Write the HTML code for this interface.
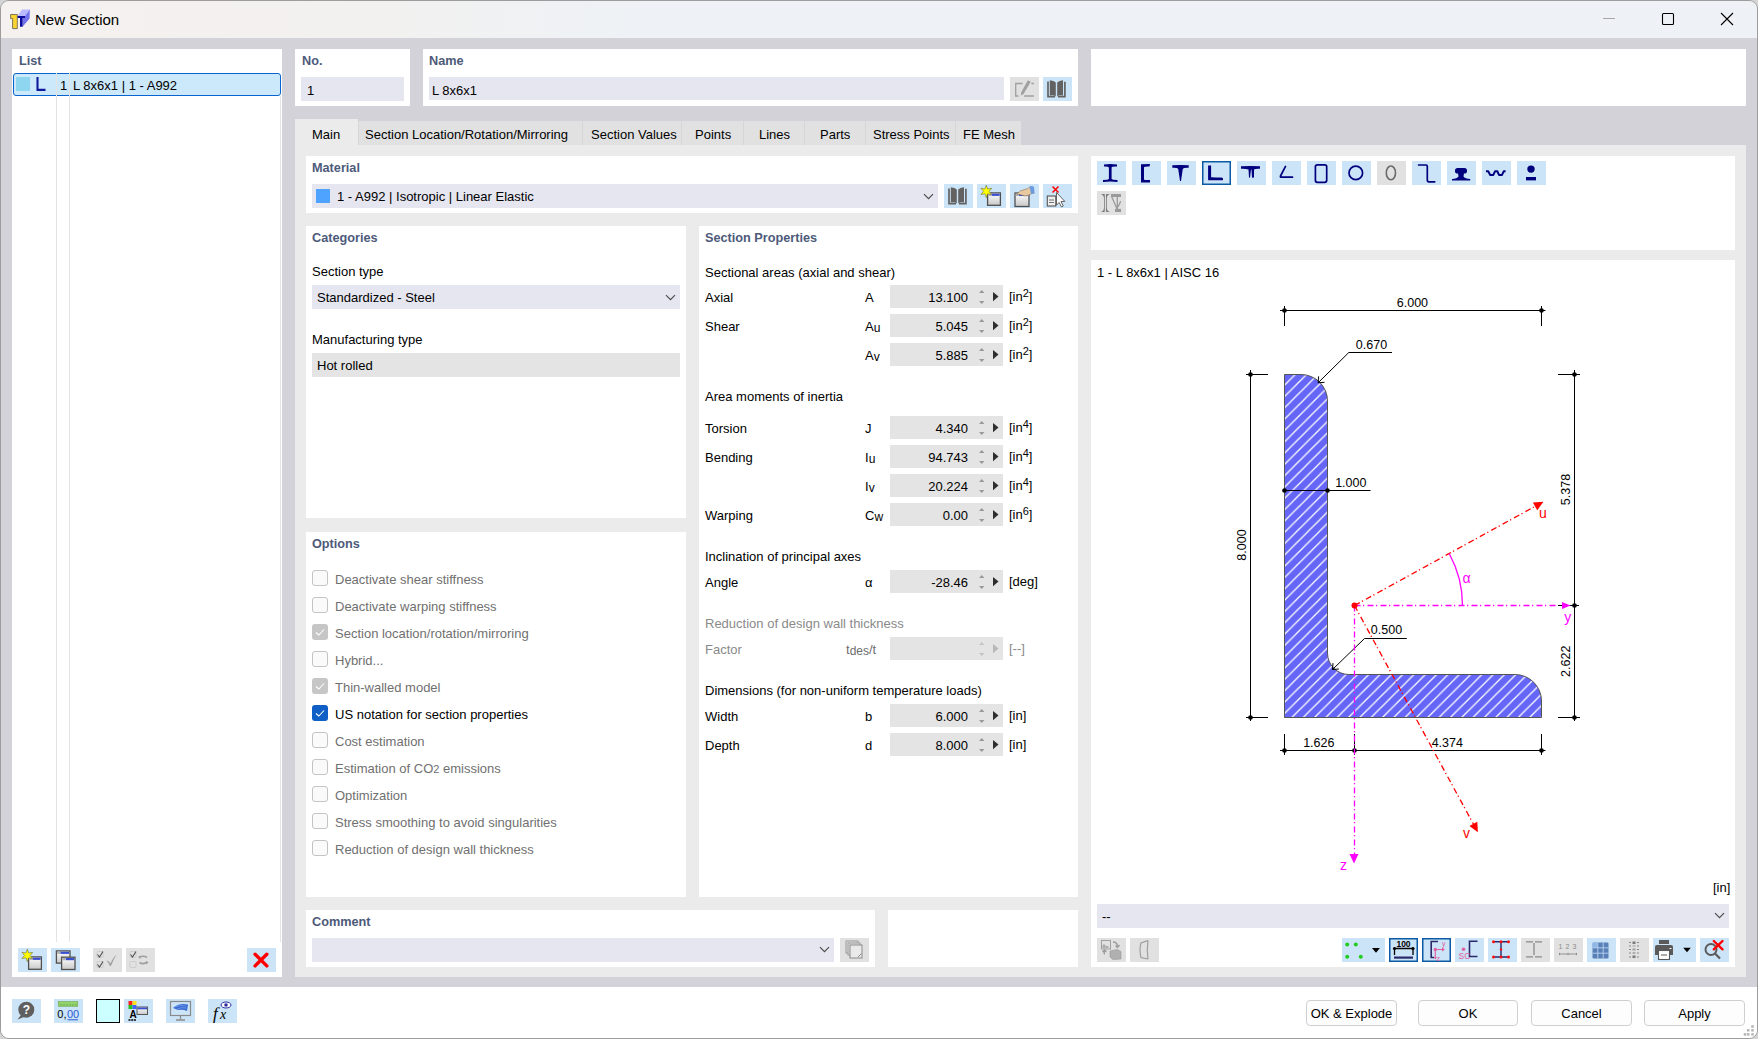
<!DOCTYPE html><html><head><meta charset="utf-8"><style>
html,body{margin:0;padding:0;width:1758px;height:1039px;overflow:hidden;background:#d4d4d4;}
.a{position:absolute;}
.t,.h{font-family:"Liberation Sans",sans-serif;font-size:13px;line-height:16px;white-space:nowrap;color:#000;}
.h{font-weight:bold;font-size:12.7px;color:#4d5a7a;}
.g{color:#707070;}
svg{position:absolute;left:0;top:0;}
</style></head><body>
<div class="a" style="left:0;top:0;width:1756px;height:1037px;border:1px solid #9c9c9c;border-radius:9px;overflow:hidden;background:#d3d2d8;">

<div class="a" style="left:-1px;top:-1px;width:1758px;height:1039px;">
<div class="a" style="left:0px;top:0px;width:1758px;height:38px;background:linear-gradient(to right,#f4f1ef 0px,#f3f1ef 330px,#eef2f6 640px,#eef2f7 1758px);"></div>
<div class="a t" style="left:35px;top:11px;font-size:15px;line-height:18px;">New Section</div>
<div class="a" style="left:0px;top:987px;width:1758px;height:52px;background:#ffffff;"></div>
<div class="a" style="left:12px;top:49px;width:270px;height:928px;background:#fff;"></div>
<div class="a h" style="left:19px;top:53px;">List</div>
<div class="a" style="left:295px;top:49px;width:115px;height:57px;background:#fff;"></div>
<div class="a h" style="left:302px;top:53px;">No.</div>
<div class="a" style="left:301px;top:77px;width:103px;height:24px;background:#e6e6f0;"></div>
<div class="a t" style="left:307px;top:83px;">1</div>
<div class="a" style="left:423px;top:49px;width:655px;height:57px;background:#fff;"></div>
<div class="a h" style="left:429px;top:53px;">Name</div>
<div class="a" style="left:429px;top:77px;width:575px;height:23px;background:#e6e6f0;"></div>
<div class="a t" style="left:432px;top:83px;">L 8x6x1</div>
<div class="a" style="left:1010px;top:77px;width:29px;height:24px;background:#e1e1e1;"></div>
<div class="a" style="left:1043px;top:77px;width:29px;height:24px;background:#cce4f7;"></div>
<div class="a" style="left:1091px;top:49px;width:655px;height:57px;background:#fff;"></div>
<div class="a" style="left:295px;top:145px;width:1451px;height:832px;background:#ebebeb;"></div>
<div class="a" style="left:295px;top:119px;width:63px;height:26px;background:#ebebeb;"></div>
<div class="a t" style="left:312px;top:127px;">Main</div>
<div class="a" style="left:358px;top:121px;width:224px;height:24px;background:#e1e1e1;border-left:1px solid #d6d6d6;box-sizing:border-box;"></div>
<div class="a t" style="left:365px;top:127px;">Section Location/Rotation/Mirroring</div>
<div class="a" style="left:582px;top:121px;width:99px;height:24px;background:#e1e1e1;border-left:1px solid #d6d6d6;box-sizing:border-box;"></div>
<div class="a t" style="left:591px;top:127px;">Section Values</div>
<div class="a" style="left:681px;top:121px;width:62px;height:24px;background:#e1e1e1;border-left:1px solid #d6d6d6;box-sizing:border-box;"></div>
<div class="a t" style="left:695px;top:127px;">Points</div>
<div class="a" style="left:743px;top:121px;width:61px;height:24px;background:#e1e1e1;border-left:1px solid #d6d6d6;box-sizing:border-box;"></div>
<div class="a t" style="left:759px;top:127px;">Lines</div>
<div class="a" style="left:804px;top:121px;width:61px;height:24px;background:#e1e1e1;border-left:1px solid #d6d6d6;box-sizing:border-box;"></div>
<div class="a t" style="left:820px;top:127px;">Parts</div>
<div class="a" style="left:865px;top:121px;width:90px;height:24px;background:#e1e1e1;border-left:1px solid #d6d6d6;box-sizing:border-box;"></div>
<div class="a t" style="left:873px;top:127px;">Stress Points</div>
<div class="a" style="left:955px;top:121px;width:66px;height:24px;background:#e1e1e1;border-left:1px solid #d6d6d6;box-sizing:border-box;"></div>
<div class="a t" style="left:963px;top:127px;">FE Mesh</div>
<div class="a" style="left:306px;top:156px;width:772px;height:57px;background:#fff;"></div>
<div class="a h" style="left:312px;top:160px;">Material</div>
<div class="a" style="left:312px;top:184px;width:626px;height:24px;background:#e6e6f0;"></div>
<div class="a" style="left:316px;top:189px;width:14px;height:14px;background:#4da3ff;"></div>
<div class="a t" style="left:337px;top:189px;">1 - A992 | Isotropic | Linear Elastic</div>
<div class="a" style="left:944px;top:184px;width:29px;height:24px;background:#cce4f7;"></div>
<div class="a" style="left:977px;top:184px;width:29px;height:24px;background:#cce4f7;"></div>
<div class="a" style="left:1010px;top:184px;width:29px;height:24px;background:#cce4f7;"></div>
<div class="a" style="left:1043px;top:184px;width:29px;height:24px;background:#cce4f7;"></div>
<div class="a" style="left:306px;top:226px;width:380px;height:292px;background:#fff;"></div>
<div class="a h" style="left:312px;top:230px;">Categories</div>
<div class="a t" style="left:312px;top:264px;">Section type</div>
<div class="a" style="left:312px;top:285px;width:368px;height:24px;background:#e6e6f0;"></div>
<div class="a t" style="left:317px;top:290px;">Standardized - Steel</div>
<div class="a t" style="left:312px;top:332px;">Manufacturing type</div>
<div class="a" style="left:312px;top:353px;width:368px;height:24px;background:#e4e4e4;"></div>
<div class="a t" style="left:317px;top:358px;">Hot rolled</div>
<div class="a" style="left:306px;top:532px;width:380px;height:365px;background:#fff;"></div>
<div class="a h" style="left:312px;top:536px;">Options</div>
<div class="a" style="left:312px;top:570px;width:16px;height:16px;background:#fafafa;border:1px solid #c4c4c4;border-radius:3px;box-sizing:border-box;"></div>
<div class="a t" style="left:335px;top:572px;color:#707070;">Deactivate shear stiffness</div>
<div class="a" style="left:312px;top:597px;width:16px;height:16px;background:#fafafa;border:1px solid #c4c4c4;border-radius:3px;box-sizing:border-box;"></div>
<div class="a t" style="left:335px;top:599px;color:#707070;">Deactivate warping stiffness</div>
<div class="a" style="left:312px;top:624px;width:16px;height:16px;background:#c6c6c6;border-radius:3px;"></div>
<div class="a t" style="left:335px;top:626px;color:#707070;">Section location/rotation/mirroring</div>
<div class="a" style="left:312px;top:651px;width:16px;height:16px;background:#fafafa;border:1px solid #c4c4c4;border-radius:3px;box-sizing:border-box;"></div>
<div class="a t" style="left:335px;top:653px;color:#707070;">Hybrid...</div>
<div class="a" style="left:312px;top:678px;width:16px;height:16px;background:#c6c6c6;border-radius:3px;"></div>
<div class="a t" style="left:335px;top:680px;color:#707070;">Thin-walled model</div>
<div class="a" style="left:312px;top:705px;width:16px;height:16px;background:#0f5fc6;border-radius:3px;"></div>
<div class="a t" style="left:335px;top:707px;">US notation for section properties</div>
<div class="a" style="left:312px;top:732px;width:16px;height:16px;background:#fafafa;border:1px solid #c4c4c4;border-radius:3px;box-sizing:border-box;"></div>
<div class="a t" style="left:335px;top:734px;color:#707070;">Cost estimation</div>
<div class="a" style="left:312px;top:759px;width:16px;height:16px;background:#fafafa;border:1px solid #c4c4c4;border-radius:3px;box-sizing:border-box;"></div>
<div class="a t" style="left:335px;top:761px;color:#707070;">Estimation of CO<span style="font-size:11px">2</span> emissions</div>
<div class="a" style="left:312px;top:786px;width:16px;height:16px;background:#fafafa;border:1px solid #c4c4c4;border-radius:3px;box-sizing:border-box;"></div>
<div class="a t" style="left:335px;top:788px;color:#707070;">Optimization</div>
<div class="a" style="left:312px;top:813px;width:16px;height:16px;background:#fafafa;border:1px solid #c4c4c4;border-radius:3px;box-sizing:border-box;"></div>
<div class="a t" style="left:335px;top:815px;color:#707070;">Stress smoothing to avoid singularities</div>
<div class="a" style="left:312px;top:840px;width:16px;height:16px;background:#fafafa;border:1px solid #c4c4c4;border-radius:3px;box-sizing:border-box;"></div>
<div class="a t" style="left:335px;top:842px;color:#707070;">Reduction of design wall thickness</div>
<div class="a" style="left:699px;top:226px;width:379px;height:671px;background:#fff;"></div>
<div class="a h" style="left:705px;top:230px;">Section Properties</div>
<div class="a t" style="left:705px;top:265px;">Sectional areas (axial and shear)</div>
<div class="a t" style="left:705px;top:290px;">Axial</div>
<div class="a t" style="left:865px;top:290px;">A</div>
<div class="a" style="left:890px;top:285px;width:113px;height:23px;background:#e4e4e4;"></div>
<div class="a t" style="left:890px;top:290px;width:78px;text-align:right;">13.100</div>
<svg class="a" style="left:979px;top:289px" width="6" height="16"><path d="M0 4.1 L2.75 1 L5.5 4.1Z M0 11.9 L2.75 15 L5.5 11.9Z" fill="#999"/></svg>
<svg class="a" style="left:993px;top:292px" width="6" height="10"><path d="M0 0 L5.5 4.6 L0 9.2Z" fill="#2e2e2e"/></svg>
<div class="a t" style="left:1009px;top:289px;">[in<span style="font-size:11px;position:relative;top:-4px">2</span>]</div>
<div class="a t" style="left:705px;top:319px;">Shear</div>
<div class="a t" style="left:865px;top:319px;">A<span style="font-size:12px;position:relative;top:1px">u</span></div>
<div class="a" style="left:890px;top:314px;width:113px;height:23px;background:#e4e4e4;"></div>
<div class="a t" style="left:890px;top:319px;width:78px;text-align:right;">5.045</div>
<svg class="a" style="left:979px;top:318px" width="6" height="16"><path d="M0 4.1 L2.75 1 L5.5 4.1Z M0 11.9 L2.75 15 L5.5 11.9Z" fill="#999"/></svg>
<svg class="a" style="left:993px;top:321px" width="6" height="10"><path d="M0 0 L5.5 4.6 L0 9.2Z" fill="#2e2e2e"/></svg>
<div class="a t" style="left:1009px;top:318px;">[in<span style="font-size:11px;position:relative;top:-4px">2</span>]</div>
<div class="a t" style="left:865px;top:348px;">A<span style="font-size:12px;position:relative;top:1px">v</span></div>
<div class="a" style="left:890px;top:343px;width:113px;height:23px;background:#e4e4e4;"></div>
<div class="a t" style="left:890px;top:348px;width:78px;text-align:right;">5.885</div>
<svg class="a" style="left:979px;top:347px" width="6" height="16"><path d="M0 4.1 L2.75 1 L5.5 4.1Z M0 11.9 L2.75 15 L5.5 11.9Z" fill="#999"/></svg>
<svg class="a" style="left:993px;top:350px" width="6" height="10"><path d="M0 0 L5.5 4.6 L0 9.2Z" fill="#2e2e2e"/></svg>
<div class="a t" style="left:1009px;top:347px;">[in<span style="font-size:11px;position:relative;top:-4px">2</span>]</div>
<div class="a t" style="left:705px;top:389px;">Area moments of inertia</div>
<div class="a t" style="left:705px;top:421px;">Torsion</div>
<div class="a t" style="left:865px;top:421px;">J</div>
<div class="a" style="left:890px;top:416px;width:113px;height:23px;background:#e4e4e4;"></div>
<div class="a t" style="left:890px;top:421px;width:78px;text-align:right;">4.340</div>
<svg class="a" style="left:979px;top:420px" width="6" height="16"><path d="M0 4.1 L2.75 1 L5.5 4.1Z M0 11.9 L2.75 15 L5.5 11.9Z" fill="#999"/></svg>
<svg class="a" style="left:993px;top:423px" width="6" height="10"><path d="M0 0 L5.5 4.6 L0 9.2Z" fill="#2e2e2e"/></svg>
<div class="a t" style="left:1009px;top:420px;">[in<span style="font-size:11px;position:relative;top:-4px">4</span>]</div>
<div class="a t" style="left:705px;top:450px;">Bending</div>
<div class="a t" style="left:865px;top:450px;">I<span style="font-size:12px;position:relative;top:1px">u</span></div>
<div class="a" style="left:890px;top:445px;width:113px;height:23px;background:#e4e4e4;"></div>
<div class="a t" style="left:890px;top:450px;width:78px;text-align:right;">94.743</div>
<svg class="a" style="left:979px;top:449px" width="6" height="16"><path d="M0 4.1 L2.75 1 L5.5 4.1Z M0 11.9 L2.75 15 L5.5 11.9Z" fill="#999"/></svg>
<svg class="a" style="left:993px;top:452px" width="6" height="10"><path d="M0 0 L5.5 4.6 L0 9.2Z" fill="#2e2e2e"/></svg>
<div class="a t" style="left:1009px;top:449px;">[in<span style="font-size:11px;position:relative;top:-4px">4</span>]</div>
<div class="a t" style="left:865px;top:479px;">I<span style="font-size:12px;position:relative;top:1px">v</span></div>
<div class="a" style="left:890px;top:474px;width:113px;height:23px;background:#e4e4e4;"></div>
<div class="a t" style="left:890px;top:479px;width:78px;text-align:right;">20.224</div>
<svg class="a" style="left:979px;top:478px" width="6" height="16"><path d="M0 4.1 L2.75 1 L5.5 4.1Z M0 11.9 L2.75 15 L5.5 11.9Z" fill="#999"/></svg>
<svg class="a" style="left:993px;top:481px" width="6" height="10"><path d="M0 0 L5.5 4.6 L0 9.2Z" fill="#2e2e2e"/></svg>
<div class="a t" style="left:1009px;top:478px;">[in<span style="font-size:11px;position:relative;top:-4px">4</span>]</div>
<div class="a t" style="left:705px;top:508px;">Warping</div>
<div class="a t" style="left:865px;top:508px;">C<span style="font-size:12px;position:relative;top:1px">w</span></div>
<div class="a" style="left:890px;top:503px;width:113px;height:23px;background:#e4e4e4;"></div>
<div class="a t" style="left:890px;top:508px;width:78px;text-align:right;">0.00</div>
<svg class="a" style="left:979px;top:507px" width="6" height="16"><path d="M0 4.1 L2.75 1 L5.5 4.1Z M0 11.9 L2.75 15 L5.5 11.9Z" fill="#999"/></svg>
<svg class="a" style="left:993px;top:510px" width="6" height="10"><path d="M0 0 L5.5 4.6 L0 9.2Z" fill="#2e2e2e"/></svg>
<div class="a t" style="left:1009px;top:507px;">[in<span style="font-size:11px;position:relative;top:-4px">6</span>]</div>
<div class="a t" style="left:705px;top:549px;">Inclination of principal axes</div>
<div class="a t" style="left:705px;top:575px;">Angle</div>
<div class="a t" style="left:865px;top:575px;">&#945;</div>
<div class="a" style="left:890px;top:570px;width:113px;height:23px;background:#e4e4e4;"></div>
<div class="a t" style="left:890px;top:575px;width:78px;text-align:right;">-28.46</div>
<svg class="a" style="left:979px;top:574px" width="6" height="16"><path d="M0 4.1 L2.75 1 L5.5 4.1Z M0 11.9 L2.75 15 L5.5 11.9Z" fill="#999"/></svg>
<svg class="a" style="left:993px;top:577px" width="6" height="10"><path d="M0 0 L5.5 4.6 L0 9.2Z" fill="#2e2e2e"/></svg>
<div class="a t" style="left:1009px;top:574px;">[deg]</div>
<div class="a t" style="left:705px;top:616px;color:#8a8a8a;">Reduction of design wall thickness</div>
<div class="a t" style="left:705px;top:642px;color:#8a8a8a;">Factor</div>
<div class="a t" style="left:846px;top:642px;color:#6e6e6e;">t<span style="font-size:12px;position:relative;top:1px">des</span>/t</div>
<div class="a" style="left:890px;top:637px;width:113px;height:23px;background:#e4e4e4;"></div>
<svg class="a" style="left:979px;top:641px" width="6" height="16"><path d="M0 4.1 L2.75 1 L5.5 4.1Z M0 11.9 L2.75 15 L5.5 11.9Z" fill="#c4c4c4"/></svg>
<svg class="a" style="left:993px;top:644px" width="6" height="10"><path d="M0 0 L5.5 4.6 L0 9.2Z" fill="#b8b8b8"/></svg>
<div class="a t" style="left:1009px;top:641px;color:#8a8a8a;">[--]</div>
<div class="a t" style="left:705px;top:683px;">Dimensions (for non-uniform temperature loads)</div>
<div class="a t" style="left:705px;top:709px;">Width</div>
<div class="a t" style="left:865px;top:709px;">b</div>
<div class="a" style="left:890px;top:704px;width:113px;height:23px;background:#e4e4e4;"></div>
<div class="a t" style="left:890px;top:709px;width:78px;text-align:right;">6.000</div>
<svg class="a" style="left:979px;top:708px" width="6" height="16"><path d="M0 4.1 L2.75 1 L5.5 4.1Z M0 11.9 L2.75 15 L5.5 11.9Z" fill="#999"/></svg>
<svg class="a" style="left:993px;top:711px" width="6" height="10"><path d="M0 0 L5.5 4.6 L0 9.2Z" fill="#2e2e2e"/></svg>
<div class="a t" style="left:1009px;top:708px;">[in]</div>
<div class="a t" style="left:705px;top:738px;">Depth</div>
<div class="a t" style="left:865px;top:738px;">d</div>
<div class="a" style="left:890px;top:733px;width:113px;height:23px;background:#e4e4e4;"></div>
<div class="a t" style="left:890px;top:738px;width:78px;text-align:right;">8.000</div>
<svg class="a" style="left:979px;top:737px" width="6" height="16"><path d="M0 4.1 L2.75 1 L5.5 4.1Z M0 11.9 L2.75 15 L5.5 11.9Z" fill="#999"/></svg>
<svg class="a" style="left:993px;top:740px" width="6" height="10"><path d="M0 0 L5.5 4.6 L0 9.2Z" fill="#2e2e2e"/></svg>
<div class="a t" style="left:1009px;top:737px;">[in]</div>
<div class="a" style="left:1091px;top:156px;width:644px;height:94px;background:#fff;"></div>
<div class="a" style="left:1091px;top:260px;width:644px;height:707px;background:#fff;"></div>
<div class="a t" style="left:1097px;top:265px;">1 - L 8x6x1 | AISC 16</div>
<div class="a" style="left:1097px;top:904px;width:632px;height:24px;background:#e6e6f0;"></div>
<div class="a t" style="left:1102px;top:909px;">--</div>
<div class="a t" style="left:1713px;top:880px;">[in]</div>
<svg width="1758" height="1039" style="position:absolute;left:0;top:0">
<defs><pattern id="hatch" patternUnits="userSpaceOnUse" x="5.7" y="0" width="11.32" height="11.32"><rect width="11.32" height="11.32" fill="#6565f7"/><path d="M-2 2 L2 -2 M0 11.32 L11.32 0 M9.32 13.32 L13.32 9.32" stroke="#fff" stroke-width="1.3"/></pattern></defs>
<path d="M1284.5 374.5 L1301 374.5 A26.5 26.5 0 0 1 1327.5 401 L1327.5 653.1 A21.4 21.4 0 0 0 1348.9 674.5 L1515 674.5 A26.5 26.5 0 0 1 1541.5 701 L1541.5 717.5 L1284.5 717.5 Z" fill="url(#hatch)" stroke="#555" stroke-width="1"/>
<line x1="1280" y1="310.5" x2="1545.5" y2="310.5" stroke="#000" stroke-width="1" fill="none"/>
<line x1="1284.5" y1="306" x2="1284.5" y2="326" stroke="#000" stroke-width="1" fill="none"/>
<line x1="1541.5" y1="306" x2="1541.5" y2="326" stroke="#000" stroke-width="1" fill="none"/>
<circle cx="1284.5" cy="310.5" r="2.35" fill="#000"/>
<circle cx="1541.5" cy="310.5" r="2.35" fill="#000"/>
<text x="1412.4" y="307" fill="#000" font-family="Liberation Sans" font-size="12.5" text-anchor="middle">6.000</text>
<line x1="1250.5" y1="370" x2="1250.5" y2="721" stroke="#000" stroke-width="1" fill="none"/>
<line x1="1246" y1="374.5" x2="1268" y2="374.5" stroke="#000" stroke-width="1" fill="none"/>
<line x1="1246" y1="717.5" x2="1268" y2="717.5" stroke="#000" stroke-width="1" fill="none"/>
<circle cx="1250.5" cy="374.5" r="2.35" fill="#000"/>
<circle cx="1250.5" cy="717.5" r="2.35" fill="#000"/>
<text x="1246" y="545" fill="#000" font-family="Liberation Sans" font-size="12.5" text-anchor="middle" transform="rotate(-90 1246 545)">8.000</text>
<line x1="1574.5" y1="370" x2="1574.5" y2="721" stroke="#000" stroke-width="1" fill="none"/>
<line x1="1558" y1="374.5" x2="1580" y2="374.5" stroke="#000" stroke-width="1" fill="none"/>
<line x1="1558" y1="717.5" x2="1580" y2="717.5" stroke="#000" stroke-width="1" fill="none"/>
<line x1="1558" y1="605.5" x2="1579" y2="605.5" stroke="#000" stroke-width="1" fill="none"/>
<circle cx="1574.5" cy="374.5" r="2.35" fill="#000"/>
<circle cx="1574.5" cy="605.5" r="2.35" fill="#000"/>
<circle cx="1574.5" cy="717.5" r="2.35" fill="#000"/>
<text x="1570" y="489.5" fill="#000" font-family="Liberation Sans" font-size="12.5" text-anchor="middle" transform="rotate(-90 1570 489.5)">5.378</text>
<text x="1570.5" y="661.3" fill="#000" font-family="Liberation Sans" font-size="12.5" text-anchor="middle" transform="rotate(-90 1570.5 661.3)">2.622</text>
<line x1="1280" y1="750.5" x2="1545.5" y2="750.5" stroke="#000" stroke-width="1" fill="none"/>
<line x1="1284.5" y1="734" x2="1284.5" y2="755" stroke="#000" stroke-width="1" fill="none"/>
<line x1="1541.5" y1="734" x2="1541.5" y2="755" stroke="#000" stroke-width="1" fill="none"/>
<line x1="1354.5" y1="734" x2="1354.5" y2="755" stroke="#000" stroke-width="1" fill="none"/>
<circle cx="1284.5" cy="750.5" r="2.35" fill="#000"/>
<circle cx="1354.5" cy="750.5" r="2.35" fill="#000"/>
<circle cx="1541.5" cy="750.5" r="2.35" fill="#000"/>
<text x="1318.8" y="747" fill="#000" font-family="Liberation Sans" font-size="12.5" text-anchor="middle">1.626</text>
<text x="1447.3" y="747" fill="#000" font-family="Liberation Sans" font-size="12.5" text-anchor="middle">4.374</text>
<line x1="1284.5" y1="490.5" x2="1370.5" y2="490.5" stroke="#000" stroke-width="1" fill="none"/>
<circle cx="1284.5" cy="490.5" r="2.35" fill="#000"/>
<circle cx="1327.5" cy="490.5" r="2.35" fill="#000"/>
<text x="1350.8" y="486.7" fill="#000" font-family="Liberation Sans" font-size="12.5" text-anchor="middle">1.000</text>
<line x1="1318.1" y1="382.8" x2="1348.8" y2="352.5" stroke="#000" stroke-width="1" fill="none"/>
<line x1="1348.8" y1="352.5" x2="1392" y2="352.5" stroke="#000" stroke-width="1" fill="none"/>
<path d="M1318.6 376.4 L1318.1 382.8 L1324.5 382.3" stroke="#000" stroke-width="1" fill="none"/>
<text x="1371.5" y="348.6" fill="#000" font-family="Liberation Sans" font-size="12.5" text-anchor="middle">0.670</text>
<line x1="1332.5" y1="669.5" x2="1364.5" y2="638.5" stroke="#000" stroke-width="1" fill="none"/>
<line x1="1364.5" y1="638.5" x2="1406.8" y2="638.5" stroke="#000" stroke-width="1" fill="none"/>
<path d="M1333 663.1 L1332.5 669.5 L1338.9 669" stroke="#000" stroke-width="1" fill="none"/>
<text x="1386.5" y="633.8" fill="#000" font-family="Liberation Sans" font-size="12.5" text-anchor="middle">0.500</text>
<line x1="1354.5" y1="605.5" x2="1558" y2="605.5" stroke="#ff00ff" stroke-width="1.3" stroke-dasharray="6 2.5 1.2 3.3"/>
<path d="M1562 601.9 L1570.5 605.5 L1562 609.1Z" fill="#ff00ff"/>
<line x1="1354.5" y1="605.5" x2="1354.5" y2="855" stroke="#ff00ff" stroke-width="1.3" stroke-dasharray="6 2.5 1.2 3.3"/>
<path d="M1349.5 854 L1354 863.5 L1358.5 854Z" fill="#ff00ff"/>
<line x1="1354.5" y1="605.5" x2="1536.3761361965762" y2="505.62953486352484" stroke="#ff0000" stroke-width="1.3" stroke-dasharray="6 2.5 1.2 3.3"/>
<path d="M1543.4 501.8 L1537.2378287838044 510.31631645151174 L1532.906814101919 502.42693676580166Z" fill="#ff0000"/>
<line x1="1354.5" y1="605.5" x2="1474.0704651364751" y2="825.2761361965761" stroke="#ff0000" stroke-width="1.3" stroke-dasharray="6 2.5 1.2 3.3"/>
<path d="M1477.9 832.3 L1469.4068796146398 826.1058974726132 L1477.312464607388 821.804534209363Z" fill="#ff0000"/>
<circle cx="1354.5" cy="605.5" r="3" fill="#ff0000"/>
<path d="M1462.5 605.5 A108 108 0 0 0 1449.32 553.80" stroke="#ff00ff" stroke-width="1.3" fill="none"/>
<text x="1466.5" y="582.5" fill="#ff00ff" font-family="Liberation Sans" font-size="14" text-anchor="middle">&#945;</text>
<text x="1567.8" y="622" fill="#ff00ff" font-family="Liberation Sans" font-size="14" text-anchor="middle">y</text>
<text x="1343.5" y="870" fill="#ff00ff" font-family="Liberation Sans" font-size="14" text-anchor="middle">z</text>
<text x="1543" y="518" fill="#ff0000" font-family="Liberation Sans" font-size="14" text-anchor="middle">u</text>
<text x="1466.5" y="838" fill="#ff0000" font-family="Liberation Sans" font-size="14" text-anchor="middle">v</text>
</svg>
<div class="a" style="left:306px;top:910px;width:569px;height:57px;background:#fff;"></div>
<div class="a h" style="left:312px;top:914px;">Comment</div>
<div class="a" style="left:312px;top:938px;width:522px;height:24px;background:#e6e6f0;"></div>
<div class="a" style="left:840px;top:938px;width:29px;height:24px;background:#e1e1e1;"></div>
<div class="a" style="left:888px;top:910px;width:190px;height:57px;background:#fff;"></div>
<div class="a t" style="left:1306px;top:1000px;width:91px;height:26px;box-sizing:border-box;border:1px solid #cfcfcf;border-radius:4px;background:#fdfdfd;text-align:center;line-height:26px;">OK &amp; Explode</div>
<div class="a t" style="left:1418px;top:1000px;width:100px;height:26px;box-sizing:border-box;border:1px solid #cfcfcf;border-radius:4px;background:#fdfdfd;text-align:center;line-height:26px;">OK</div>
<div class="a t" style="left:1531px;top:1000px;width:101px;height:26px;box-sizing:border-box;border:1px solid #cfcfcf;border-radius:4px;background:#fdfdfd;text-align:center;line-height:26px;">Cancel</div>
<div class="a t" style="left:1644px;top:1000px;width:101px;height:26px;box-sizing:border-box;border:1px solid #cfcfcf;border-radius:4px;background:#fdfdfd;text-align:center;line-height:26px;">Apply</div>
<svg width="0" height="0" style="position:absolute"><defs><linearGradient id="wg" x1="0" y1="0" x2="0" y2="1"><stop offset="0" stop-color="#ffffff"/><stop offset="1" stop-color="#c8c8c8"/></linearGradient></defs></svg>
<div class="a" style="left:1097px;top:161px;width:29px;height:24px;background:#cce4f7;"><svg width="29" height="24" style="position:absolute;left:0;top:0"><path d="M7 3.5 Q13.5 2.6 20 3.5 L20 5.5 Q15 5.3 14.6 6.5 L14.6 18 Q15 18.8 20.5 19 L20.5 21 Q13.5 20 6 21 L6 19 Q11.5 18.8 11.9 18 L11.9 6.5 Q11.5 5.3 7 5.5Z" fill="#00007f"/></svg></div>
<div class="a" style="left:1132px;top:161px;width:29px;height:24px;background:#cce4f7;"><svg width="29" height="24" style="position:absolute;left:0;top:0"><path d="M9 3.3 L18 3 L17.5 5.5 Q12.3 5.3 12 6.5 L12 18.5 Q12.3 19.3 18 19 L18 21.5 L9 21.5Z" fill="#00007f"/></svg></div>
<div class="a" style="left:1167px;top:161px;width:29px;height:24px;background:#cce4f7;"><svg width="29" height="24" style="position:absolute;left:0;top:0"><path d="M5.3 4.3 Q13.5 3.5 21.7 4.3 L21.7 6.8 Q16.5 6.6 15.8 8 L14 20 L13 20 L11.2 8 Q10.5 6.6 5.3 6.8Z" fill="#00007f"/></svg></div>
<div class="a" style="left:1202px;top:161px;width:29px;height:24px;background:#cce4f7;box-shadow:inset 0 0 0 1.5px #0b5aa5;"><svg width="29" height="24" style="position:absolute;left:0;top:0"><path d="M6.1 4.6 L9.1 4.4 L9.1 16 Q9.3 16.5 19.5 16.4 Q21 16.5 21 17.8 L21 19.3 L6.1 19.3Z" fill="#00007f"/></svg></div>
<div class="a" style="left:1237px;top:161px;width:29px;height:24px;background:#cce4f7;"><svg width="29" height="24" style="position:absolute;left:0;top:0"><path d="M4 5.3 Q13.5 4.5 23 5.3 L23 7.7 Q18 7.5 17 8.5 L17 16.5 L15 16.8 L14.5 8.6 L14 8.6 L13 16.8 L12 16.5 L11.5 8.5 Q9 7.5 4 7.7Z" fill="#00007f"/></svg></div>
<div class="a" style="left:1272px;top:161px;width:29px;height:24px;background:#cce4f7;"><svg width="29" height="24" style="position:absolute;left:0;top:0"><path d="M13.5 5.4 L8.5 15 Q8 16.2 9.5 16.2 L20.5 16.2" stroke="#00007f" stroke-width="1.7" fill="none" stroke-linecap="round" stroke-linejoin="round"/></svg></div>
<div class="a" style="left:1307px;top:161px;width:29px;height:24px;background:#cce4f7;"><svg width="29" height="24" style="position:absolute;left:0;top:0"><rect x="8.4" y="3.8" width="11.3" height="17.5" rx="2" stroke="#00007f" stroke-width="1.7" fill="none"/></svg></div>
<div class="a" style="left:1342px;top:161px;width:29px;height:24px;background:#cce4f7;"><svg width="29" height="24" style="position:absolute;left:0;top:0"><circle cx="13.8" cy="11.9" r="6.8" stroke="#00007f" stroke-width="1.7" fill="none"/></svg></div>
<div class="a" style="left:1377px;top:161px;width:29px;height:24px;background:#e1e1e1;"><svg width="29" height="24" style="position:absolute;left:0;top:0"><ellipse cx="13.9" cy="11.9" rx="4.6" ry="6.9" stroke="#6a6a6a" stroke-width="1.6" fill="none"/></svg></div>
<div class="a" style="left:1412px;top:161px;width:29px;height:24px;background:#cce4f7;"><svg width="29" height="24" style="position:absolute;left:0;top:0"><path d="M6.6 4 L14 4 Q15.3 4 15.3 5.3 L15.3 19 Q15.3 20.8 17 20.8 L22.7 20.8" stroke="#00007f" stroke-width="1.7" fill="none" stroke-linecap="round"/></svg></div>
<div class="a" style="left:1447px;top:161px;width:29px;height:24px;background:#cce4f7;"><svg width="29" height="24" style="position:absolute;left:0;top:0"><rect x="8" y="6.9" width="12" height="5.6" rx="2.6" fill="#00007f"/><path d="M11 12 L17 12 L16.5 15.5 Q18 17.5 23.2 18 L23.2 19.4 L5 19.4 L5 18 Q10 17.5 11.5 15.5Z" fill="#00007f"/></svg></div>
<div class="a" style="left:1482px;top:161px;width:29px;height:24px;background:#cce4f7;"><svg width="29" height="24" style="position:absolute;left:0;top:0"><path d="M4 10.3 L6.2 10.3 L8.2 13.9 L11.3 13.9 L13.1 10.3 L15.3 10.3 L17 13.9 L20 13.9 L21.8 10.3 L23.6 10.3" stroke="#00007f" stroke-width="2" fill="none" stroke-linejoin="round"/></svg></div>
<div class="a" style="left:1517px;top:161px;width:29px;height:24px;background:#cce4f7;"><svg width="29" height="24" style="position:absolute;left:0;top:0"><circle cx="14" cy="8.1" r="3.7" fill="#00007f"/><rect x="9" y="16" width="10" height="3.4" fill="#00007f"/></svg></div>
<div class="a" style="left:1097px;top:191px;width:29px;height:24px;background:#e1e1e1;"><svg width="29" height="24" style="position:absolute;left:0;top:0"><path d="M4 3 L7.6 3 Q8 5 7.8 7 L7.8 17 Q8 19 7.6 21 L4 21 Q7 20 7 16.5 L7 7.5 Q7 4 4 3Z" fill="#7a7a7a"/><path d="M12.8 3 L9.2 3 Q8.8 5 9 7 L9 17 Q8.8 19 9.2 21 L12.8 21 Q9.8 20 9.8 16.5 L9.8 7.5 Q9.8 4 12.8 3Z" fill="#7a7a7a"/><rect x="14" y="3" width="10" height="3" fill="#9a9a9a"/><rect x="18" y="17.8" width="6" height="3.2" fill="#9a9a9a"/><path d="M14.6 5.5 L20.3 18.5 M20.3 6 L20.3 18 M23.7 10.3 L21 16" stroke="#9a9a9a" stroke-width="1.3" fill="none"/></svg></div>
<div class="a" style="left:1010px;top:77px;width:29px;height:24px;background:#e1e1e1;"><svg width="29" height="24" style="position:absolute;left:0;top:0"><path d="M12.6 6.5 L5.7 6.5 L5.7 19 L8.5 19 M14.2 19 L23.9 19 M21.4 6.5 L23.9 6.5" stroke="#a0a0a0" stroke-width="1.3" fill="none"/><path d="M17.8 3.3 L20.8 4.8 L13.5 17 L11.2 18.6 L11 15.8Z" fill="#a0a0a0"/></svg></div>
<div class="a" style="left:1043px;top:77px;width:29px;height:24px;background:#cce4f7;"><svg width="29" height="24" style="position:absolute;left:0;top:0"><path d="M6.8 3.2 Q11 3.6 12.8 5.5 L12.8 19.5 Q11 17.6 6.8 18.5Z" fill="#626262"/><path d="M20 3.2 Q16 3.6 14.2 5.5 L14.2 19.5 Q16 17.6 20 18.5Z" fill="#626262"/><path d="M5 4.5 L5 19.7 L12 19.7 M21.9 4.8 L21.9 19.7 L15 19.7" stroke="#626262" stroke-width="1.7" fill="none"/></svg></div>
<div class="a" style="left:944px;top:184px;width:29px;height:24px;background:#cce4f7;"><svg width="29" height="24" style="position:absolute;left:0;top:0"><path d="M6.8 3.2 Q11 3.6 12.8 5.5 L12.8 19.5 Q11 17.6 6.8 18.5Z" fill="#626262"/><path d="M20 3.2 Q16 3.6 14.2 5.5 L14.2 19.5 Q16 17.6 20 18.5Z" fill="#626262"/><path d="M5 4.5 L5 19.7 L12 19.7 M21.9 4.8 L21.9 19.7 L15 19.7" stroke="#626262" stroke-width="1.7" fill="none"/></svg></div>
<div class="a" style="left:977px;top:184px;width:29px;height:24px;background:#cce4f7;"><svg width="29" height="24" style="position:absolute;left:0;top:0"><rect x="10.6" y="8.9" width="12.8" height="12.4" fill="url(#wg)" stroke="#505050" stroke-width="1.3"/><rect x="14.6" y="9.700000000000001" width="8.0" height="2.2" fill="#3a4fd0"/><rect x="11.4" y="9.700000000000001" width="3" height="2.2" fill="#b0b0b0"/><polygon points="9.30,1.20 7.91,4.98 3.93,4.30 6.51,7.40 3.93,10.50 7.91,9.82 9.30,13.60 10.69,9.82 14.67,10.50 12.09,7.40 14.67,4.30 10.70,4.98" fill="#ffff00" stroke="#6b6b40" stroke-width="0.6"/></svg></div>
<div class="a" style="left:1010px;top:184px;width:29px;height:24px;background:#cce4f7;"><svg width="29" height="24" style="position:absolute;left:0;top:0"><rect x="5" y="9" width="14" height="13.5" fill="url(#wg)" stroke="#505050" stroke-width="1.3"/><rect x="9" y="9.8" width="9.2" height="2.2" fill="#3a4fd0"/><rect x="5.8" y="9.8" width="3" height="2.2" fill="#b0b0b0"/><path d="M7 10 Q10 6 15 5.5 Q18 5 20 3 L22.5 3.5 L24 9 L20.5 10 Q18 12 15 12 Q12 11 7 10Z" fill="#e8c9a0" stroke="#8a7050" stroke-width="0.6"/><path d="M19.5 2.5 Q22 1.2 24 3 L24.5 9.5 L21 9.8Z" fill="#6a9ae0"/></svg></div>
<div class="a" style="left:1043px;top:184px;width:29px;height:24px;background:#cce4f7;"><svg width="29" height="24" style="position:absolute;left:0;top:0"><rect x="4.3" y="12" width="8.5" height="10" fill="#eee" stroke="#555" stroke-width="1.1"/><path d="M6 16 L11 16 M6 18.5 L11 18.5" stroke="#777" stroke-width="1"/><path d="M13.5 8.5 L13.5 21 L16.2 18.5 L18.5 23 L20.3 22 L18 17.6 L21.8 17.4Z" fill="#fff" stroke="#555" stroke-width="0.9"/><path d="M9.5 2.5 L15.5 8.5 M15.5 2.5 L9.5 8.5" stroke="#ff0000" stroke-width="1.5"/></svg></div>
<div class="a" style="left:18px;top:948px;width:29px;height:24px;background:#cce4f7;"><svg width="29" height="24" style="position:absolute;left:0;top:0"><rect x="10.6" y="8.9" width="12.8" height="12.4" fill="url(#wg)" stroke="#505050" stroke-width="1.3"/><rect x="14.6" y="9.700000000000001" width="8.0" height="2.2" fill="#3a4fd0"/><rect x="11.4" y="9.700000000000001" width="3" height="2.2" fill="#b0b0b0"/><polygon points="9.30,1.20 7.91,4.98 3.93,4.30 6.51,7.40 3.93,10.50 7.91,9.82 9.30,13.60 10.69,9.82 14.67,10.50 12.09,7.40 14.67,4.30 10.70,4.98" fill="#ffff00" stroke="#6b6b40" stroke-width="0.6"/></svg></div>
<div class="a" style="left:51px;top:948px;width:29px;height:24px;background:#cce4f7;"><svg width="29" height="24" style="position:absolute;left:0;top:0"><rect x="5.4" y="2.9" width="13.6" height="12.2" fill="url(#wg)" stroke="#505050" stroke-width="1.3"/><rect x="9.4" y="3.7" width="8.8" height="2.2" fill="#3a4fd0"/><rect x="6.2" y="3.7" width="3" height="2.2" fill="#b0b0b0"/><rect x="10.6" y="9.2" width="13.4" height="12.3" fill="url(#wg)" stroke="#505050" stroke-width="1.3"/><rect x="14.6" y="10.0" width="8.600000000000001" height="2.2" fill="#3a4fd0"/><rect x="11.4" y="10.0" width="3" height="2.2" fill="#b0b0b0"/></svg></div>
<div class="a" style="left:93px;top:948px;width:29px;height:24px;background:#e1e1e1;"><svg width="29" height="24" style="position:absolute;left:0;top:0"><rect x="4" y="3.5" width="6" height="6" rx="1" fill="none" stroke="#c8c8c8" stroke-width="0.8"/><rect x="4" y="13.5" width="6" height="6" rx="1" fill="none" stroke="#c8c8c8" stroke-width="0.8"/><path d="M4.5 6.5 L6.5 9 L10 3.5 M4.5 16.5 L6.5 19 L10 13.5" stroke="#505050" stroke-width="1.1" fill="none"/><path d="M13.5 12.5 Q16 12.5 17.5 15.5 Q20 9.5 23.6 6.8 Q20.5 11 18.3 17.3 Q17.5 18.6 16.6 17.4 Q15.5 14.5 13.5 12.5Z" fill="#a0a0a0"/></svg></div>
<div class="a" style="left:126px;top:948px;width:29px;height:24px;background:#e1e1e1;"><svg width="29" height="24" style="position:absolute;left:0;top:0"><rect x="4" y="3.5" width="6" height="6" rx="1" fill="none" stroke="#c8c8c8" stroke-width="0.8"/><rect x="4" y="13.5" width="6" height="6" rx="1" fill="none" stroke="#c8c8c8" stroke-width="0.8"/><path d="M4.5 6.5 L6.5 9 L10 3.5" stroke="#505050" stroke-width="1.1" fill="none"/><path d="M13 9.5 Q17 7 21 9.5 M21.5 14 Q17 17 13.5 14.5" stroke="#a0a0a0" stroke-width="1.6" fill="none"/><path d="M12 9 L14.5 7.5 L14.5 11Z M22.5 14.5 L20 16.5 L20 13Z" fill="#a0a0a0"/></svg></div>
<div class="a" style="left:247px;top:948px;width:29px;height:24px;background:#cce4f7;"><svg width="29" height="24" style="position:absolute;left:0;top:0"><path d="M8.1 6.2 L19.8 17.9 M19.8 6.2 L8.1 17.9" stroke="#ff0000" stroke-width="3.4" stroke-linecap="round"/></svg></div>
<div class="a" style="left:12px;top:999px;width:29px;height:24px;background:#cce4f7;"><svg width="29" height="24" style="position:absolute;left:0;top:0"><circle cx="14.3" cy="10.7" r="8" fill="#5f5f5f"/><path d="M9 16 L5.5 20.5 L12 18Z" fill="#5f5f5f"/><text x="14.3" y="15" font-family="Liberation Sans" font-weight="bold" font-size="12" fill="#fff" text-anchor="middle">?</text></svg></div>
<div class="a" style="left:54px;top:999px;width:29px;height:24px;background:#cce4f7;"><svg width="29" height="24" style="position:absolute;left:0;top:0"><rect x="4.2" y="2.4" width="19.6" height="5" fill="#8fd36a" stroke="#6aa050" stroke-width="0.5"/><path d="M7 5 L7 7 M10 5 L10 7 M13 5 L13 7 M16 5 L16 7 M19 5 L19 7 M22 5 L22 7" stroke="#5a8a40" stroke-width="0.6"/><text x="3.3" y="19" font-family="Liberation Sans" font-size="11" fill="#000">0,</text><text x="13" y="19" font-family="Liberation Sans" font-size="11" fill="#2a5ad8">00</text><path d="M13.5 20.8 L24 20.8" stroke="#2a5ad8" stroke-width="1"/></svg></div>
<div class="a" style="left:96px;top:999px;width:24px;height:24px;background:#ccffff;border:1.5px solid #000;box-sizing:border-box;"></div>
<div class="a" style="left:124px;top:999px;width:29px;height:24px;background:#cce4f7;"><svg width="29" height="24" style="position:absolute;left:0;top:0"><rect x="4.5" y="2" width="4" height="4" fill="#ff2020"/><rect x="8.5" y="2" width="4" height="4" fill="#ffe020"/><rect x="4.5" y="6" width="4" height="4" fill="#20c020"/><rect x="8.5" y="6" width="4" height="4" fill="#4060ff"/><rect x="13" y="8" width="10.5" height="7.5" fill="url(#wg)" stroke="#555" stroke-width="1"/><rect x="13.5" y="8.5" width="9.5" height="1.8" fill="#3a4fd0"/><text x="5.5" y="19" font-family="Liberation Sans" font-weight="bold" font-size="10" fill="#000">A</text><path d="M4.5 21 L12 21" stroke="#000" stroke-width="1.5" stroke-dasharray="2 0.7"/></svg></div>
<div class="a" style="left:166px;top:999px;width:29px;height:24px;background:#cce4f7;"><svg width="29" height="24" style="position:absolute;left:0;top:0"><rect x="4.5" y="2.5" width="20" height="14" fill="none" stroke="#8a8a8a" stroke-width="1.2"/><path d="M14.5 17 L14.5 20 M10 21 L19 21" stroke="#8a8a8a" stroke-width="1.3"/><path d="M7 9 Q13 3.5 22 5.5 L21 12 Q17 10 12 11 Z" fill="#3a6ad0"/><path d="M9 8 Q14 5.5 20 7 M11 10 Q15 8 20.5 9" stroke="#a0c0ff" stroke-width="0.5" fill="none"/></svg></div>
<div class="a" style="left:208px;top:999px;width:29px;height:24px;background:#cce4f7;"><svg width="29" height="24" style="position:absolute;left:0;top:0"><text x="5" y="19.5" font-family="Liberation Serif" font-style="italic" font-size="17" fill="#000">f</text><text x="12" y="19.5" font-family="Liberation Serif" font-style="italic" font-size="14" fill="#000">x</text><ellipse cx="18" cy="6" rx="5" ry="3" fill="#fff" stroke="#3030a0" stroke-width="1"/><circle cx="18" cy="6" r="1.8" fill="#3030a0"/></svg></div>
<div class="a" style="left:1097px;top:938px;width:29px;height:24px;background:#e1e1e1;"><svg width="29" height="24" style="position:absolute;left:0;top:0"><rect x="4.5" y="2.5" width="9" height="8.5" fill="none" stroke="#9a9a9a" stroke-width="0.9"/><path d="M6 10 L6 7 L8 7 L8 10 M9 10 L9 8.5 L11 8.5 L11 10" fill="#aaa" stroke="#aaa"/><path d="M16 4 Q20 4 20.5 8 M18.5 7.5 L20.5 9.5 L22.5 7" stroke="#9a9a9a" stroke-width="1.3" fill="none"/><path d="M8 16 Q6.5 16 7.5 12.5 M5.5 14 L7.5 12 L9.5 14" stroke="#9a9a9a" stroke-width="1.3" fill="none"/><path d="M13 13 L20 11.5 L24 13.5 L24 21 L16 21.5 L13 19Z" fill="#b0b0b0" stroke="#999" stroke-width="0.6"/></svg></div>
<div class="a" style="left:1130px;top:938px;width:29px;height:24px;background:#e1e1e1;"><svg width="29" height="24" style="position:absolute;left:0;top:0"><path d="M18 2.5 L11 5 Q9 12 11 19.5 L18 21 M18 2.5 Q16.5 12 18 21" stroke="#9a9a9a" stroke-width="1.1" fill="none"/></svg></div>
<div class="a" style="left:1342px;top:938px;width:43px;height:24px;background:#cce4f7;"><svg width="43" height="24" style="position:absolute;left:0;top:0"><circle cx="5.2" cy="6.5" r="2" fill="#22cc22"/><circle cx="13.8" cy="6.5" r="2" fill="#22cc22"/><circle cx="5.2" cy="18.8" r="2" fill="#22cc22"/><circle cx="18.8" cy="18.8" r="2" fill="#22cc22"/><path d="M30 10.1 L37.9 10.1 L34 14.8Z" fill="#000"/></svg></div>
<div class="a" style="left:1389px;top:938px;width:29px;height:24px;background:#cce4f7;box-shadow:inset 0 0 0 1.5px #0b5aa5;"><svg width="29" height="24" style="position:absolute;left:0;top:0"><text x="14.5" y="8.5" font-family="Liberation Sans" font-weight="bold" font-size="8.5" fill="#000" text-anchor="middle">100</text><path d="M5.5 9.5 L5.5 17 M24 9.5 L24 17 M5.5 10.5 L24 10.5" stroke="#000" stroke-width="1.3"/><circle cx="5.5" cy="10.5" r="1.6"/><circle cx="24" cy="10.5" r="1.6"/><rect x="5" y="18.5" width="19" height="2.2" fill="#2a2a6a"/></svg></div>
<div class="a" style="left:1422px;top:938px;width:29px;height:24px;background:#cce4f7;box-shadow:inset 0 0 0 1.5px #0b5aa5;"><svg width="29" height="24" style="position:absolute;left:0;top:0"><path d="M16 3.5 L9.2 3.5 L9.2 19.5 L12 19.5" stroke="#2a2a6a" stroke-width="1.6" fill="none"/><path d="M13.3 11.5 L21 11.5 M13.3 11.5 L13.3 21" stroke="#e060a0" stroke-width="1.1"/><circle cx="13.3" cy="11.5" r="1.7" fill="#e060a0"/><path d="M20 9.5 L23 11.5 L20 13.5Z M11.8 19 L13.3 21.5 L14.8 19Z" fill="#e060a0"/><text x="20" y="8" font-family="Liberation Sans" font-size="7" fill="#e060a0">y</text><text x="14.5" y="23" font-family="Liberation Sans" font-size="7" fill="#e060a0">z</text></svg></div>
<div class="a" style="left:1455px;top:938px;width:29px;height:24px;background:#cce4f7;"><svg width="29" height="24" style="position:absolute;left:0;top:0"><path d="M22.5 3.3 L14.5 3.3 L14.5 18.5 L22.5 18.5" stroke="#2a2a6a" stroke-width="1.6" fill="none"/><circle cx="8.5" cy="11.3" r="1.8" fill="#e060a0"/><text x="3.5" y="20.5" font-family="Liberation Sans" font-size="8.5" fill="#e060a0">SC</text></svg></div>
<div class="a" style="left:1488px;top:938px;width:29px;height:24px;background:#cce4f7;"><svg width="29" height="24" style="position:absolute;left:0;top:0"><path d="M5.5 3.8 L20.5 3.8 M5.5 19 L20.5 19 M13 3.8 L13 19" stroke="#2a2a6a" stroke-width="1.4"/><circle cx="5.5" cy="3.8" r="1.5" fill="#ff1010"/><circle cx="13" cy="3.8" r="1.5" fill="#ff1010"/><circle cx="20.5" cy="3.8" r="1.5" fill="#ff1010"/><circle cx="5.5" cy="19" r="1.5" fill="#ff1010"/><circle cx="13" cy="19" r="1.5" fill="#ff1010"/><circle cx="20.5" cy="19" r="1.5" fill="#ff1010"/><circle cx="13" cy="11.4" r="1.2" fill="#ff1010"/></svg></div>
<div class="a" style="left:1521px;top:938px;width:29px;height:24px;background:#e1e1e1;"><svg width="29" height="24" style="position:absolute;left:0;top:0"><path d="M5 3.8 L12 3.8 M14 3.8 L21 3.8 M5 18.8 L12 18.8 M14 18.8 L21 18.8 M13 5 L13 17" stroke="#8a8a8a" stroke-width="1.3"/></svg></div>
<div class="a" style="left:1554px;top:938px;width:29px;height:24px;background:#e1e1e1;"><svg width="29" height="24" style="position:absolute;left:0;top:0"><text x="4.5" y="11" font-family="Liberation Sans" font-size="7" fill="#8a8a8a">1</text><text x="11.5" y="11" font-family="Liberation Sans" font-size="7" fill="#8a8a8a">2</text><text x="18.5" y="11" font-family="Liberation Sans" font-size="7" fill="#8a8a8a">3</text><path d="M5 16 L23 16 M5.5 14.8 L5.5 17.2 M14 14.8 L14 17.2 M22.5 14.8 L22.5 17.2" stroke="#8a8a8a" stroke-width="0.9"/></svg></div>
<div class="a" style="left:1587px;top:938px;width:29px;height:24px;background:#cce4f7;"><svg width="29" height="24" style="position:absolute;left:0;top:0"><rect x="5.5" y="4.5" width="16" height="16" rx="1.2" fill="#5a80b8"/><path d="M5.5 9.8 L21.5 9.8 M5.5 15.2 L21.5 15.2 M10.8 4.5 L10.8 20.5 M16.2 4.5 L16.2 20.5" stroke="#b8d4f0" stroke-width="0.9"/><rect x="5.5" y="4.5" width="5.3" height="5.3" fill="#a8d0f8" opacity="0.7"/></svg></div>
<div class="a" style="left:1620px;top:938px;width:29px;height:24px;background:#e1e1e1;"><svg width="29" height="24" style="position:absolute;left:0;top:0"><path d="M9 4.5 L11 4.5 M17 4.5 L19 4.5 M9 8 L11 8 M17 8 L19 8 M9 11.5 L11 11.5 M17 11.5 L19 11.5 M9 15 L11 15 M17 15 L19 15 M9 19 L11 19 M17 19 L19 19" stroke="#8a8a8a" stroke-width="1"/><rect x="12.5" y="3.5" width="3" height="2.5" fill="#7a7a7a"/><rect x="12.5" y="7" width="3" height="2" fill="#c0c0c0"/><rect x="12.5" y="10.5" width="3" height="2" fill="#a0a0a0"/><rect x="12.5" y="14" width="3" height="2" fill="#b0b0b0"/><rect x="12.5" y="17.5" width="3" height="2.5" fill="#7a7a7a"/></svg></div>
<div class="a" style="left:1653px;top:938px;width:43px;height:24px;background:#cce4f7;"><svg width="43" height="24" style="position:absolute;left:0;top:0"><rect x="6" y="2" width="10" height="4" fill="#5a5a5a"/><path d="M2 9 Q2 7 4 7 L18 7 Q20 7 20 9 L20 17 L2 17Z" fill="#5a5a5a"/><rect x="5.5" y="12.5" width="11" height="9" fill="#fff" stroke="#5a5a5a" stroke-width="1.1"/><path d="M8 17 L14 17" stroke="#5a5a5a" stroke-width="1"/><rect x="16.5" y="10" width="2" height="1" fill="#fff"/><path d="M30.2 9.8 L37.8 9.8 L34 14.2Z" fill="#000"/></svg></div>
<div class="a" style="left:1700px;top:938px;width:29px;height:24px;background:#cce4f7;"><svg width="29" height="24" style="position:absolute;left:0;top:0"><circle cx="11" cy="11.5" r="5.5" fill="none" stroke="#5a5a5a" stroke-width="2"/><path d="M15 15.5 L20 20.5" stroke="#5a5a5a" stroke-width="2.2"/><path d="M13.8 3 L22.5 11.3 M22.5 3 L13.8 11.3" stroke="#ff0000" stroke-width="2.4" stroke-linecap="round"/></svg></div>
<div class="a" style="left:840px;top:938px;width:29px;height:24px;background:#e1e1e1;"><svg width="29" height="24" style="position:absolute;left:0;top:0"><rect x="6" y="3" width="12" height="12" fill="none" stroke="#9a9a9a" stroke-width="1"/><rect x="8" y="5" width="12" height="12" fill="#e1e1e1" stroke="#9a9a9a" stroke-width="1"/><rect x="10" y="7" width="12" height="13" fill="#eaeaea" stroke="#8a8a8a" stroke-width="1"/><path d="M18 19 L21.5 15.5" stroke="#8a8a8a" stroke-width="1"/></svg></div>
<div class="a" style="left:13px;top:73px;width:268px;height:23px;box-sizing:border-box;border:1px solid #0a64d0;border-radius:3px;background:#cce8fb;"></div>
<div class="a" style="left:16px;top:77px;width:14px;height:14px;background:#8ed6f0;"></div>
<svg class="a" style="left:0;top:0" width="60" height="100"><path d="M37.5 77 L37.5 89.9 L45.5 89.9" stroke="#0d1a9e" stroke-width="2.1" fill="none"/></svg>
<div class="a" style="left:56px;top:73px;width:1px;height:869px;background:#e3e3e3;"></div>
<div class="a" style="left:69px;top:73px;width:1px;height:869px;background:#e3e3e3;"></div>
<div class="a" style="left:280px;top:96px;width:1px;height:846px;background:#e3e3e3;"></div>
<div class="a t" style="left:60px;top:78px;">1</div>
<div class="a t" style="left:73px;top:78px;">L 8x6x1 | 1 - A992</div>
<svg class="a" style="left:0;top:0" width="1758" height="38"><path d="M1603 18.5 L1615 18.5" stroke="#a8a8a8" stroke-width="1"/><rect x="1662.5" y="13.5" width="11" height="11" rx="1" fill="none" stroke="#000" stroke-width="1.1"/><path d="M1721 13 L1733 25 M1733 13 L1721 25" stroke="#000" stroke-width="1.1"/><path d="M10.6 14.5 L17.3 14.5 L17.3 28.6 L12.6 28.6 L12.6 18.6 L10.6 18.6Z" fill="#fcd431" stroke="#6e6a55" stroke-width="0.9"/><path d="M17.6 16.1 L22 9.4 L29.8 9.4 L25 16.1Z" fill="#b9b9ff"/><path d="M25 16.1 L29.8 9.4 L29.6 18.5 L22.6 26.7 L22.6 18 L25 18Z" fill="#7474ea"/><path d="M17.6 16.1 L25 16.1 L25 18 L22.6 18 L22.6 26.7 L20 26.7 L20 18 L17.6 18Z" fill="#0c0c9a"/></svg>
<svg class="a" style="left:923px;top:192.5px" width="12" height="8"><path d="M1 1.2 L5.5 5.7 L10 1.2" stroke="#4a4a4a" stroke-width="1.15" fill="none"/></svg>
<svg class="a" style="left:665px;top:294px" width="12" height="8"><path d="M1 1.2 L5.5 5.7 L10 1.2" stroke="#4a4a4a" stroke-width="1.15" fill="none"/></svg>
<svg class="a" style="left:818.6px;top:946px" width="12" height="8"><path d="M1 1.2 L5.5 5.7 L10 1.2" stroke="#4a4a4a" stroke-width="1.15" fill="none"/></svg>
<svg class="a" style="left:1713.6px;top:912.3px" width="12" height="8"><path d="M1 1.2 L5.5 5.7 L10 1.2" stroke="#4a4a4a" stroke-width="1.15" fill="none"/></svg>
<svg class="a" style="left:312px;top:624px" width="16" height="16"><path d="M4 8.5 L6.8 11 L12 5.5" stroke="#fff" stroke-width="1.05" fill="none"/></svg>
<svg class="a" style="left:312px;top:678px" width="16" height="16"><path d="M4 8.5 L6.8 11 L12 5.5" stroke="#fff" stroke-width="1.05" fill="none"/></svg>
<svg class="a" style="left:312px;top:705px" width="16" height="16"><path d="M4 8.5 L6.8 11 L12 5.5" stroke="#fff" stroke-width="1.05" fill="none"/></svg>
<svg class="a" style="left:1740px;top:1020px" width="18" height="18"><rect x="11.25" y="5.25" width="2.5" height="2.5" fill="#b4b4b4"/><rect x="6.95" y="9.05" width="2.5" height="2.5" fill="#b4b4b4"/><rect x="11.25" y="9.05" width="2.5" height="2.5" fill="#b4b4b4"/><rect x="3.75" y="13.15" width="2.5" height="2.5" fill="#b4b4b4"/><rect x="6.95" y="13.15" width="2.5" height="2.5" fill="#b4b4b4"/><rect x="11.25" y="13.15" width="2.5" height="2.5" fill="#b4b4b4"/></svg>
</div></div></body></html>
